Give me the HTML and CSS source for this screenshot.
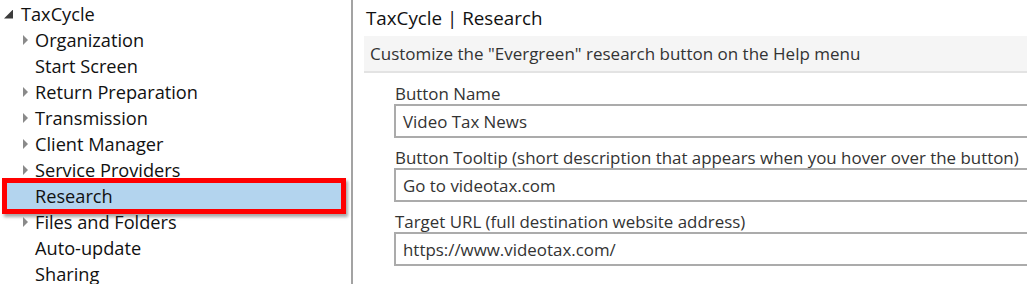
FILE: index.html
```html
<!DOCTYPE html>
<html>
<head>
<meta charset="utf-8">
<link rel="stylesheet" href="styles.css">
</head>
<body>
<div class="app">
  <div class="tree">
    <div class="row root"><span class="arrow-open"></span><span class="label">TaxCycle</span></div>
    <div class="row child"><span class="arrow"></span><span class="label">Organization</span></div>
    <div class="row child"><span class="noarrow"></span><span class="label">Start Screen</span></div>
    <div class="row child"><span class="arrow"></span><span class="label">Return Preparation</span></div>
    <div class="row child"><span class="arrow"></span><span class="label">Transmission</span></div>
    <div class="row child"><span class="arrow"></span><span class="label">Client Manager</span></div>
    <div class="row child"><span class="arrow"></span><span class="label">Service Providers</span></div>
    <div class="row child selected"><span class="noarrow"></span><span class="label">Research</span></div>
    <div class="row child"><span class="arrow"></span><span class="label">Files and Folders</span></div>
    <div class="row child"><span class="noarrow"></span><span class="label">Auto-update</span></div>
    <div class="row child"><span class="noarrow"></span><span class="label">Sharing</span></div>
  </div>
  <div class="content">
    <div class="title">TaxCycle | Research</div>
    <div class="band">Customize the "Evergreen" research button on the Help menu</div>
    <div class="fields">
      <div class="field">
        <div class="flabel">Button Name</div>
        <div class="input">Video Tax News</div>
      </div>
      <div class="field">
        <div class="flabel">Button Tooltip (short description that appears when you hover over the button)</div>
        <div class="input">Go to videotax.com</div>
      </div>
      <div class="field">
        <div class="flabel">Target URL (full destination website address)</div>
        <div class="input">https://www.videotax.com/</div>
      </div>
    </div>
  </div>
</div>
</body>
</html>
```
FILE: styles.css
```css
* { box-sizing: border-box; }
html, body { margin: 0; padding: 0; background: #fff; overflow: hidden; }
body {
  font-family: "Open Sans", "Noto Sans", sans-serif;
  color: #111;
  width: 1027px;
  height: 284px;
}
.app { display: flex; height: 284px; }
.tree {
  width: 353px;
  flex: none;
  border-right: 2px solid #a3a3a3;
  padding-top: 1px;
}
.row {
  height: 26px;
  display: flex;
  align-items: center;
  font-size: 18.2px;
  white-space: nowrap;
  position: relative;
}
.root { padding-left: 4px; }
.root .label { margin-left: 8px; }
.child { padding-left: 23px; }
.child .label { margin-left: 7px; }
.arrow-open {
  width: 9px; height: 9px;
  background: #3c3c3c;
  clip-path: polygon(100% 0, 100% 100%, 0 100%);
}
.arrow {
  width: 5px; height: 10px;
  background: #8a8a8a;
  clip-path: polygon(0 0, 100% 50%, 0 100%);
}
.noarrow { width: 5px; height: 10px; }
.selected { background: #b3d4ee; margin: 0 10px 0 7px; padding-left: 16px; }
.selected::after {
  content: "";
  position: absolute;
  left: -5px; right: -5px; top: -5px; bottom: -5px;
  border: 5px solid #ff0000;
  box-shadow: 2px 3px 3px rgba(0,0,0,0.35);
}
.content { flex: 1; padding-left: 11px; min-width: 0; }
.title {
  font-size: 18.8px;
  height: 36px;
  display: flex;
  align-items: center;
  padding-left: 2px;
}
.band {
  background: #f5f5f5;
  border-bottom: 2px solid #e3e3e3;
  height: 37px;
  display: flex;
  align-items: center;
  padding-left: 6px;
  font-size: 17px;
  color: #333;
  white-space: nowrap;
}
.fields { padding-left: 30px; padding-top: 9px; display: flex; flex-direction: column; gap: 8px; }
.field { display: flex; flex-direction: column; }
.flabel {
  font-size: 16.9px;
  height: 22px;
  display: flex;
  align-items: center;
  padding-left: 1px;
  white-space: nowrap;
  color: #333;
}
.input {
  height: 34px;
  border: 2px solid #ababab;
  border-right: none;
  display: flex;
  align-items: center;
  padding-left: 7px;
  font-size: 16.9px;
  color: #333;
}
```
